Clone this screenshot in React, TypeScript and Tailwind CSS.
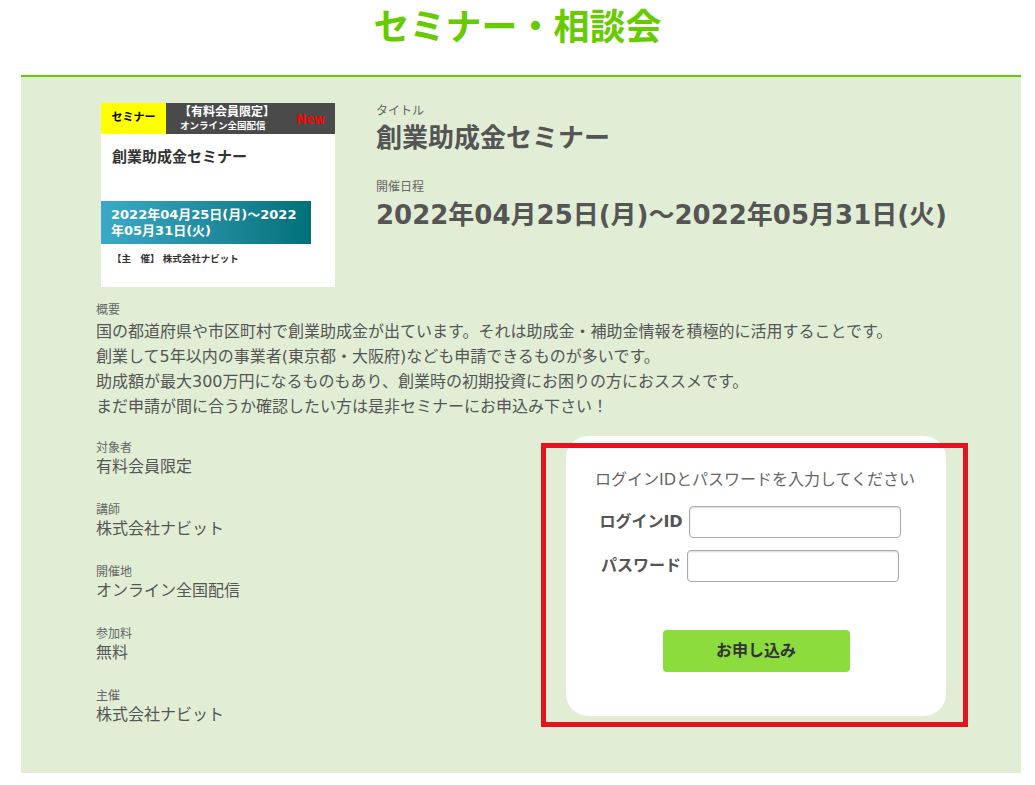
import React from 'react';

const font = { fontFamily: '"DejaVu Sans", "Noto Sans CJK JP", "Noto Sans", sans-serif' };
const cjk = { fontFamily: '"Noto Sans CJK JP", "Noto Sans", sans-serif' };

const infoItems = [
  { label: '対象者', value: '有料会員限定' },
  { label: '講師', value: '株式会社ナビット' },
  { label: '開催地', value: 'オンライン全国配信' },
  { label: '参加料', value: '無料' },
  { label: '主催', value: '株式会社ナビット' },
];

// サムネイル画像風のカード
const SeminarThumb = () => (
  <div className="w-[234px] h-[184px] bg-white shrink-0 flex flex-col">
    <div className="flex h-[31px]">
      <div className="w-[65px] bg-[#ffff00] flex items-center justify-center text-[11px] font-bold text-black">
        セミナー
      </div>
      <div className="flex-1 bg-[#4a4a4a] flex items-center pl-[13px] pr-[10px]">
        <div className="flex flex-col leading-[14px] text-white font-bold">
          <span className="text-[12px]">【有料会員限定】</span>
          <span className="text-[9.5px] pl-[1px]">オンライン全国配信</span>
        </div>
        <span className="ml-auto text-[13px] font-bold text-[#ff0000]" style={cjk}>New</span>
      </div>
    </div>
    <div className="px-[11px] pt-[12px] text-[15px] font-bold text-[#333] leading-[22px]">創業助成金セミナー</div>
    <div className="mt-[33px] w-[210px] h-[43px] bg-gradient-to-r from-[#3aaac8] to-[#00717a] text-white font-bold text-[13px] leading-[16px] pl-[10px] flex flex-col justify-center">
      <span>2022年04月25日(月)～2022</span>
      <span>年05月31日(火)</span>
    </div>
    <div className="px-[11px] mt-[8px] text-[9.5px] font-bold text-[#333]">【主　催】 株式会社ナビット</div>
  </div>
);

const LoginBox = () => (
  <div className="relative">
    <div className="w-[380px] h-[280px] bg-white rounded-[22px] flex flex-col items-center pt-[33px]">
      <p className="text-[16px] leading-[22px] text-[#666] pr-[2px]">ログインIDとパスワードを入力してください</p>
      <div className="mt-[15px] flex flex-col items-center gap-[12px] pr-[12px]">
        <div className="flex items-center gap-[6px]">
          <span className="text-[16px] font-bold text-[#555]">ログインID</span>
          <input className="w-[212px] h-[32px] rounded-[4px] border border-[#aaa] shadow-[inset_0_1px_2px_rgba(0,0,0,0.15)] bg-white" />
        </div>
        <div className="flex items-center gap-[6px]">
          <span className="text-[16px] font-bold text-[#555]">パスワード</span>
          <input type="password" className="w-[212px] h-[32px] rounded-[4px] border border-[#aaa] shadow-[inset_0_1px_2px_rgba(0,0,0,0.15)] bg-white" />
        </div>
      </div>
      <button className="mt-[48px] w-[187px] h-[42px] rounded-[4px] bg-[#8bdc3c] text-[16px] font-bold text-[#333]">
        お申し込み
      </button>
    </div>
    {/* 赤枠の注記 */}
    <div className="absolute left-[-25px] top-[7px] w-[427px] h-[284px] border-[5px] border-[#e3141d] pointer-events-none" />
  </div>
);

export default function App() {
  return (
    <div className="w-[1035px] h-[785px] bg-white text-[#555]" style={font}>
      <h1 className="h-[75px] pt-[4px] text-center text-[36px] font-bold text-[#66cc00] leading-[48px]">
        セミナー・相談会
      </h1>
      <div className="ml-[21px] w-[1000px] h-[698px] bg-[#e1eed5] border-t-2 border-[#66cc00] pt-[26px]">
        <div className="flex pl-[80px]">
          <SeminarThumb />
          <div className="ml-[41px] flex flex-col">
            <span className="text-[12px] leading-[16px] text-[#666]">タイトル</span>
            <span className="mt-[2px] text-[26px] font-bold leading-[34px]">創業助成金セミナー</span>
            <span className="mt-[24px] text-[12px] leading-[16px] text-[#666]">開催日程</span>
            <span className="mt-[2px] text-[26px] font-bold leading-[36px]">2022年04月25日(月)～2022年05月31日(火)</span>
          </div>
        </div>

        <div className="pl-[75px] mt-[14px]">
          <div className="text-[12px] leading-[18px] text-[#666]">概要</div>
          <p className="text-[16px] leading-[25px]">
            国の都道府県や市区町村で創業助成金が出ています。それは助成金・補助金情報を積極的に活用することです。<br />
            創業して5年以内の事業者(東京都・大阪府)なども申請できるものが多いです。<br />
            助成額が最大300万円になるものもあり、創業時の初期投資にお困りの方におススメです。<br />
            まだ申請が間に合うか確認したい方は是非セミナーにお申込み下さい！
          </p>
        </div>

        <div className="flex pl-[75px] mt-[17px]">
          <div className="w-[470px] flex flex-col gap-[24px] pt-[3px]">
            {infoItems.map((item) => (
              <div key={item.label} className="flex flex-col">
                <span className="text-[12px] leading-[18px] text-[#666]">{item.label}</span>
                <span className="text-[16px] leading-[20px]">{item.value}</span>
              </div>
            ))}
          </div>
          <LoginBox />
        </div>
      </div>
    </div>
  );
}
